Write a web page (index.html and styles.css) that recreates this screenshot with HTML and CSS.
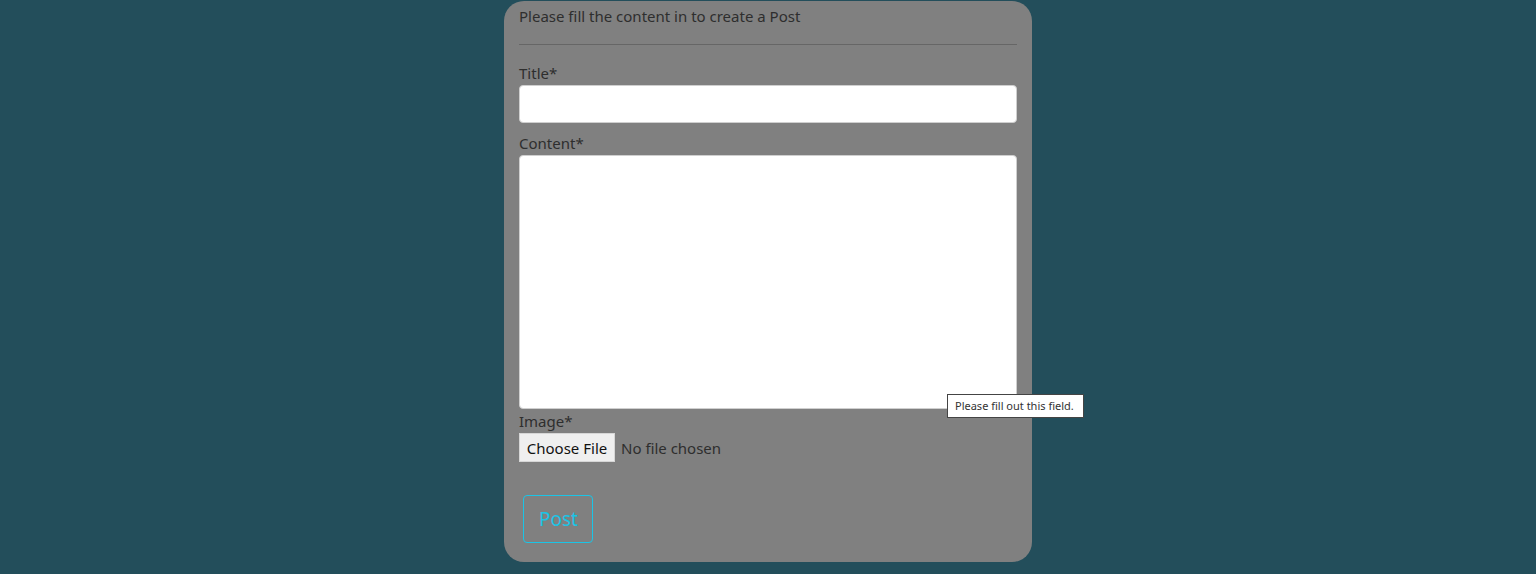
FILE: index.html
```html
<!DOCTYPE html>
<html lang="en">
<head>
<meta charset="utf-8">
<title>Create a Post</title>
<link rel="stylesheet" href="styles.css">
</head>
<body>
<div class="card">
  <div class="card-head">Please fill the content in to create a Post</div>
  <form class="form">
    <label class="label" for="title">Title*</label>
    <input class="field" id="title" type="text">
    <label class="label gap" for="content">Content*</label>
    <div class="area-wrap">
      <textarea class="field area" id="content"></textarea>
      <div class="tooltip">Please fill out this field.</div>
    </div>
    <label class="label img-label" for="image">Image*</label>
    <div class="file-row">
      <span class="file-btn">Choose File</span>
      <span class="file-text">No file chosen</span>
    </div>
    <button class="post" type="button">Post</button>
  </form>
</div>
</body>
</html>
```

FILE: styles.css
```css
html, body {
  margin: 0;
  padding: 0;
}
body {
  background: #234e5b;
  font-family: "Noto Sans", "Open Sans", sans-serif;
  color: #2e2e2e;
  height: 574px;
  overflow: hidden;
}
.card {
  width: 498px;
  margin: 1px auto 0;
  padding: 0 15px 19px;
  background: #808080;
  border-radius: 20px;
}
.card-head {
  height: 44px;
  box-sizing: border-box;
  line-height: 30px;
  font-size: 15px;
  border-bottom: 1px solid #666;
}
.form {
  display: flex;
  flex-direction: column;
  padding-top: 17px;
}
.label {
  font-size: 15px;
  line-height: 22px;
  margin-bottom: 1px;
}
.gap {
  margin-top: 9px;
}
.img-label {
  margin-top: 1px;
}
.field {
  display: block;
  box-sizing: border-box;
  width: 498px;
  height: 38px;
  margin: 0;
  border: 1px solid #cfcfcf;
  border-radius: 4px;
  background: #fff;
  font: inherit;
}
.area-wrap {
  position: relative;
}
.area {
  height: 254px;
  resize: none;
}
.tooltip {
  position: absolute;
  left: 428px;
  top: 239px;
  width: 137px;
  height: 24px;
  box-sizing: border-box;
  background: #fff;
  border: 1px solid #444;
  font-size: 11px;
  line-height: 22px;
  padding-left: 7px;
  color: #333;
  white-space: nowrap;
}
.file-row {
  display: flex;
  align-items: center;
  height: 29px;
}
.file-btn {
  width: 96px;
  height: 29px;
  box-sizing: border-box;
  background: #efefef;
  border: 1px solid #d6d6d6;
  display: flex;
  align-items: center;
  justify-content: center;
  font-size: 15px;
  color: #111;
}
.file-text {
  margin-left: 6px;
  font-size: 15px;
}
.post {
  align-self: flex-start;
  margin: 33px 0 0 4px;
  width: 70px;
  height: 48px;
  background: transparent;
  border: 1px solid #1bc4e6;
  border-radius: 4px;
  color: #1bc4e6;
  font-family: inherit;
  font-size: 19px;
  padding: 0 0 0 1px;
}
```
